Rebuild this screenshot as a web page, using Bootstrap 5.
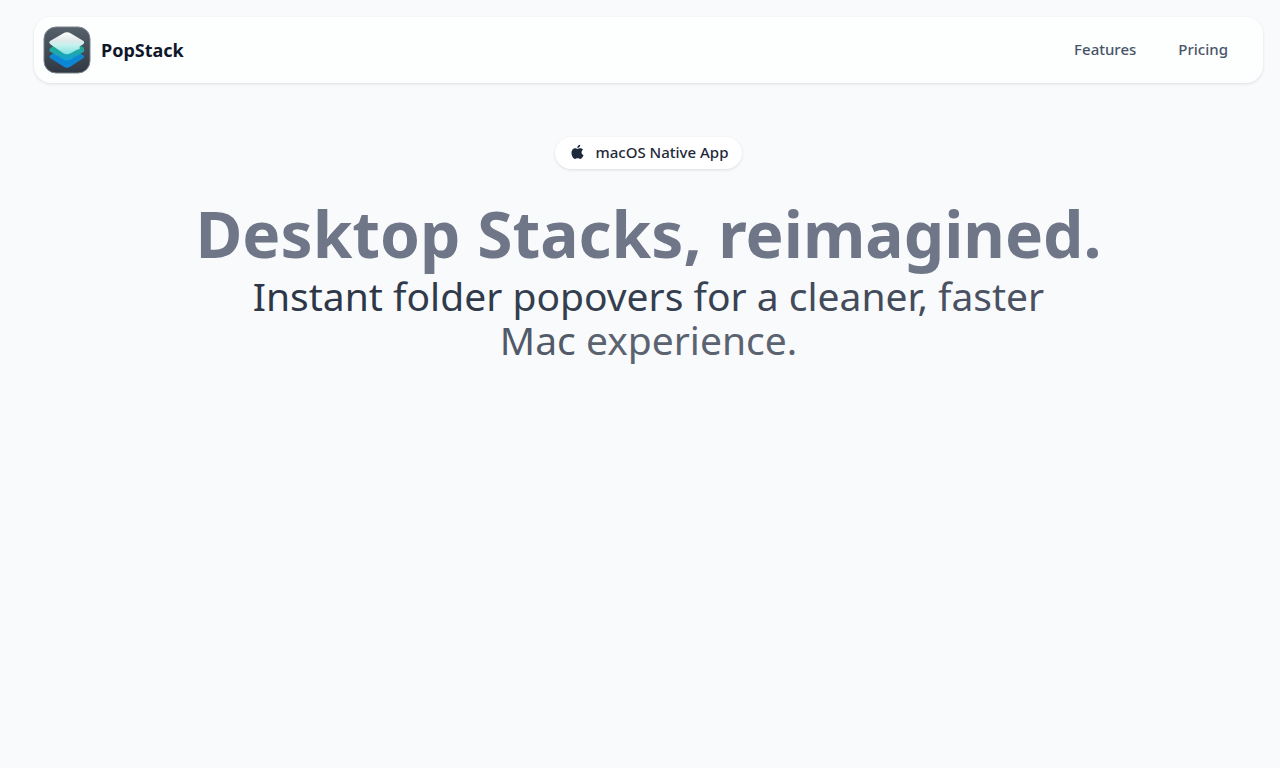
<!DOCTYPE html>
<html lang="en">
<head>
<meta charset="utf-8">
<meta name="viewport" content="width=device-width, initial-scale=1">
<title>PopStack</title>
<link href="https://cdn.jsdelivr.net/npm/bootstrap@5.3.0/dist/css/bootstrap.min.css" rel="stylesheet">
<style>
body { background: #f9fafc; color: #1e293b; font-family: "Noto Sans", sans-serif; }
.page { padding: 17px 17px 48px 34px; }
.topbar { background: #fdfefe; border-radius: 17px; box-shadow: 0 1px 3px rgba(15,23,42,.12); padding: 9px 14px 9px 9px; }
.brand { gap: 10px; }
.brand-name { font-size: 18px; font-weight: 700; line-height: 24px; color: #0f172a; }
.topbar .nav-link { font-size: 15px; font-weight: 500; line-height: 20px; color: #475569; padding: 7px 21px 9px; }
.platform { background: #fff; font-size: 15px; font-weight: 500; line-height: 20px; padding: 5px 14px 7px 16px; box-shadow: 0 1px 3px rgba(15,23,42,.12); }
.hero { padding-top: 54px; }
.hero h1 { font-size: 64px; font-weight: 700; line-height: 70px; color: #6e7687; margin: 30px 0 5px; }
.tagline { font-size: 39px; line-height: 44px; max-width: 820px; }
.t1 { color: #2d3748; } .t2 { color: #303a4b; } .t3 { color: #343e4f; } .t4 { color: #384253; } .t5 { color: #3d4656; }
.t6 { color: #434c5b; } .t7 { color: #4a5261; } .t8 { color: #525a69; } .t9 { color: #5b6371; }
</style>
</head>
<body>
<div class="page">
  <header>
    <nav class="topbar d-flex align-items-center justify-content-between">
      <a href="#" class="brand d-flex align-items-center text-decoration-none">
        <svg width="48" height="48" viewBox="0 0 48 48" aria-hidden="true">
          <defs>
            <linearGradient id="tile" x1="0" y1="0" x2="0" y2="1"><stop offset="0" stop-color="#56606a"/><stop offset="1" stop-color="#303943"/></linearGradient>
            <linearGradient id="base" x1="0" y1="0" x2="0" y2="1"><stop offset="0" stop-color="#19a5df"/><stop offset=".5" stop-color="#0c86d0"/><stop offset="1" stop-color="#0c86d6"/></linearGradient>
            <linearGradient id="middle" x1="0" y1="0" x2="0" y2="1"><stop offset="0" stop-color="#20a28f"/><stop offset=".5" stop-color="#20a9a2"/><stop offset="1" stop-color="#149fdb"/></linearGradient>
            <linearGradient id="top" x1="0" y1="0" x2="0" y2="1"><stop offset="0" stop-color="#fff"/><stop offset=".35" stop-color="#e4e9e9"/><stop offset=".6" stop-color="#c3f1ee"/><stop offset="1" stop-color="#7ee3e2"/></linearGradient>
          </defs>
          <rect x="1" y="1" width="46" height="46" rx="12" fill="url(#tile)" stroke="#7b838b" stroke-width="1"/>
          <path d="M7 29.500Q5.500 31 7 32L20.500 40.600Q24 43 27.500 40.600L40.500 32Q42 31 40.500 29.500L24 20Z" fill="url(#base)"/>
          <path d="M7 22.500Q5.500 24 7 25.500L20.500 33.500Q24 35.500 27.500 33.500L40.500 26Q42 24.500 40.500 21.500L38 20L24 16L10 20Z" fill="url(#middle)"/>
          <path d="M20 7.500Q24 5 28 7.500L40.500 15Q42 16.500 40.500 18L36.500 20.500Q37.500 24 34.500 23.500L28 27Q24 29.500 20 27L7 18Q5.500 16.500 7 15Z" fill="url(#top)"/>
        </svg>
        <span class="brand-name">PopStack</span>
      </a>
      <ul class="nav flex-nowrap">
        <li class="nav-item"><a class="nav-link" href="#features">Features</a></li>
        <li class="nav-item"><a class="nav-link" href="#pricing">Pricing</a></li>
      </ul>
    </nav>
  </header>
  <main class="hero d-flex flex-column align-items-center text-center">
    <div class="platform rounded-pill d-flex align-items-center gap-2">
      <svg class="me-1" width="13" height="16" viewBox="0 0 13 16" fill="#1e293b" aria-hidden="true">
        <path d="M9.200 .8C9.300 2.700 8 4 6.300 4C6.200 2.300 7.500 1 9.200 .8Z"/>
        <path d="M6.500 4.900C7.300 4.900 8 4.200 9.300 4.200C10.500 4.200 11.500 4.800 12.100 5.700C9.900 7 10.100 10.200 12.600 11.100C12 12.900 10.800 14.800 9.300 14.900C8.300 14.900 7.900 14.300 6.700 14.300C5.500 14.300 5 14.900 4.100 14.900C2.200 15 .5 11.700 .5 8.800C.5 5.900 2.200 4.200 4.100 4.200C5.200 4.200 5.900 4.900 6.500 4.900Z"/>
      </svg>
      <span>macOS Native App</span>
    </div>
    <h1>Desktop Stacks, reimagined.</h1>
    <p class="tagline mb-0"><span class="t1">Instant</span> <span class="t2">folder</span> <span class="t3">popovers</span> <span class="t4">for</span> <span class="t5">a</span> <span class="t6">cleaner,</span> <span class="t7">faster</span> <span class="t8">Mac</span> <span class="t9">experience.</span></p>
  </main>
</div>
<script src="https://cdn.jsdelivr.net/npm/bootstrap@5.3.0/dist/js/bootstrap.bundle.min.js"></script>
</body>
</html>
